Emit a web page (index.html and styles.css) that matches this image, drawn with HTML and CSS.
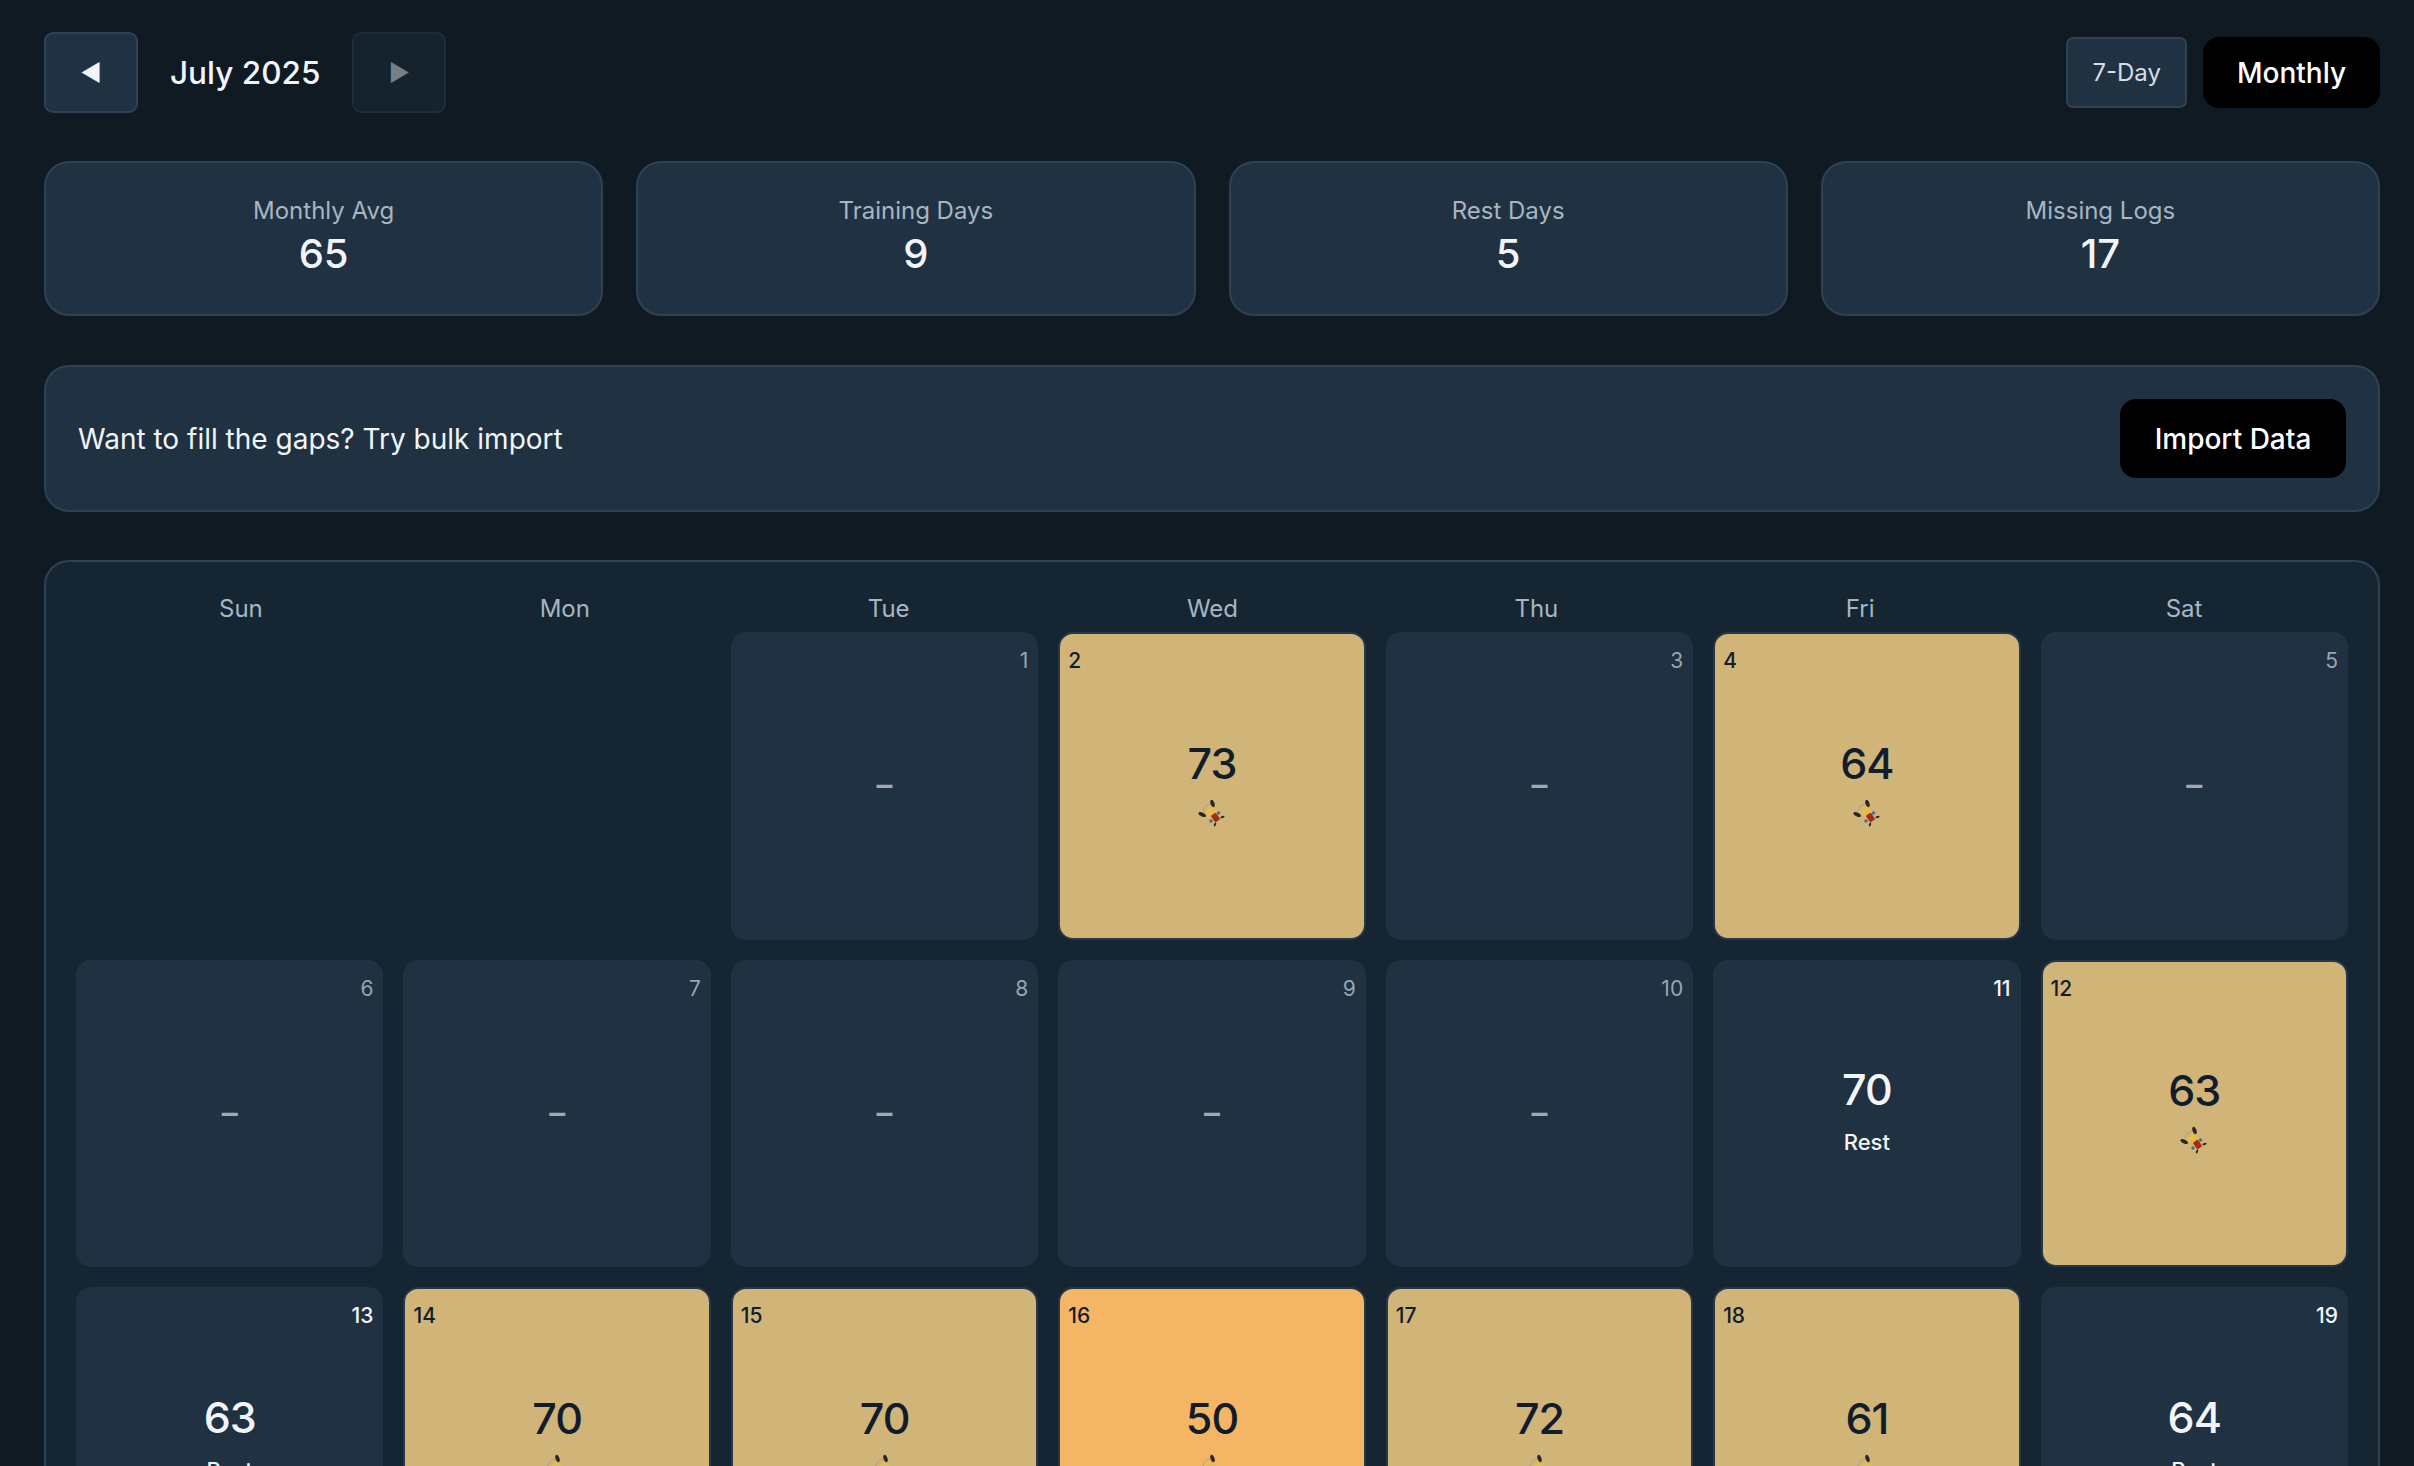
FILE: index.html
```html
<!DOCTYPE html>
<html>
<head>
	<title>Calendar</title>
	<link rel="stylesheet" href="styles.css">
</head>
<body>
	<svg class="defs" width="0" height="0">
		<symbol id="lifter" viewBox="0 0 28 28">
			<path d="M5 12 C6 8 9 5 13 5" stroke="#b5a67f" stroke-width="1.200" fill="none"/>
			<ellipse cx="14.500" cy="4.500" rx="1.900" ry="3.800" transform="rotate(-20 14.500 4.500)" fill="#26262a"/>
			<ellipse cx="4.200" cy="15.500" rx="4" ry="1.900" transform="rotate(25 4.200 15.500)" fill="#26262a"/>
			<path d="M7.500 13 L14 7.500 L20 13 L15 22 Z" fill="#e8bc4c"/>
			<rect x="14.500" y="14.500" width="6" height="8" rx="1" transform="rotate(-35 17.500 18.500)" fill="#a52a1c"/>
			<circle cx="20.500" cy="14" r="1.700" fill="#3a6ea5"/>
			<circle cx="13" cy="22" r="1.700" fill="#3a6ea5"/>
			<ellipse cx="24.500" cy="18" rx="2.100" ry="1" transform="rotate(-20 24.500 18)" fill="#26262a"/>
			<ellipse cx="17" cy="25.500" rx="1" ry="2.100" transform="rotate(20 17 25.500)" fill="#26262a"/>
		</symbol>
	</svg>

	<div class="topbar">
		<div class="month-nav">
			<button class="nav-btn">&#9664;</button>
			<h1 class="month-title">July 2025</h1>
			<button class="nav-btn nav-off">&#9654;</button>
		</div>
		<div class="view-switch">
			<button class="view-btn">7-Day</button>
			<button class="view-btn view-on">Monthly</button>
		</div>
	</div>

	<div class="stats">
		<div class="stat"><div class="stat-label">Monthly Avg</div><div class="stat-value">65</div></div>
		<div class="stat"><div class="stat-label">Training Days</div><div class="stat-value">9</div></div>
		<div class="stat"><div class="stat-label">Rest Days</div><div class="stat-value">5</div></div>
		<div class="stat"><div class="stat-label">Missing Logs</div><div class="stat-value">17</div></div>
	</div>

	<div class="banner">
		<span>Want to fill the gaps? Try bulk import</span>
		<button class="import-btn">Import Data</button>
	</div>

	<div class="calendar">
		<div class="weekdays">
			<div>Sun</div><div>Mon</div><div>Tue</div><div>Wed</div><div>Thu</div><div>Fri</div><div>Sat</div>
		</div>
		<div class="days">
			<div></div>
			<div></div>
			<div class="day"><span class="num">1</span><span class="dash">–</span></div>
			<div class="day trained"><span class="num">2</span><span class="score">73</span><svg class="lift"><use href="#lifter"/></svg></div>
			<div class="day"><span class="num">3</span><span class="dash">–</span></div>
			<div class="day trained"><span class="num">4</span><span class="score">64</span><svg class="lift"><use href="#lifter"/></svg></div>
			<div class="day"><span class="num">5</span><span class="dash">–</span></div>

			<div class="day"><span class="num">6</span><span class="dash">–</span></div>
			<div class="day"><span class="num">7</span><span class="dash">–</span></div>
			<div class="day"><span class="num">8</span><span class="dash">–</span></div>
			<div class="day"><span class="num">9</span><span class="dash">–</span></div>
			<div class="day"><span class="num">10</span><span class="dash">–</span></div>
			<div class="day rest"><span class="num">11</span><span class="score">70</span><span class="rest-label">Rest</span></div>
			<div class="day trained"><span class="num">12</span><span class="score">63</span><svg class="lift"><use href="#lifter"/></svg></div>

			<div class="day rest"><span class="num">13</span><span class="score">63</span><span class="rest-label">Rest</span></div>
			<div class="day trained"><span class="num">14</span><span class="score">70</span><svg class="lift"><use href="#lifter"/></svg></div>
			<div class="day trained"><span class="num">15</span><span class="score">70</span><svg class="lift"><use href="#lifter"/></svg></div>
			<div class="day trained low"><span class="num">16</span><span class="score">50</span><svg class="lift"><use href="#lifter"/></svg></div>
			<div class="day trained"><span class="num">17</span><span class="score">72</span><svg class="lift"><use href="#lifter"/></svg></div>
			<div class="day trained"><span class="num">18</span><span class="score">61</span><svg class="lift"><use href="#lifter"/></svg></div>
			<div class="day rest"><span class="num">19</span><span class="score">64</span><span class="rest-label">Rest</span></div>
		</div>
	</div>
</body>
</html>
```

FILE: styles.css
```css
html, body {
	height: 100%;
	overflow: hidden;
}

body {
	margin: 0;
	padding: 32px 34px 0 44px;
	box-sizing: border-box;
	background: #0f1a23;
	color: #f1f5f9;
	font-family: Inter, "Liberation Sans", sans-serif;
}

button {
	font-family: inherit;
	cursor: pointer;
}

.defs {
	position: absolute;
}

.topbar {
	display: flex;
	justify-content: space-between;
	align-items: center;
	height: 81px;
	margin-bottom: 48px;
}

.month-nav {
	display: flex;
	align-items: center;
	gap: 32px;
}

.month-title {
	margin: 0;
	font-size: 31.5px;
	font-weight: 500;
}

.nav-btn {
	width: 94px;
	height: 81px;
	background: #203141;
	border: 2px solid #2e4256;
	border-radius: 9px;
	color: #f1f5f9;
	font-size: 23px;
}

.nav-off {
	background: #15232f;
	border-color: #1e2d3b;
	color: #767f88;
}

.view-switch {
	display: flex;
	gap: 16px;
}

.view-btn {
	height: 71px;
	padding: 0 24px;
	background: #203141;
	border: 2px solid #2e4256;
	border-radius: 7px;
	color: #d5dee6;
	font-size: 24px;
}

.view-on {
	padding: 0 34px;
	background: #000;
	border: 0;
	border-radius: 16px;
	color: #fff;
	font-size: 28px;
	font-weight: 500;
}

.stats {
	display: grid;
	grid-template-columns: repeat(4, 1fr);
	gap: 33px;
	margin-bottom: 49px;
}

.stat {
	height: 155px;
	box-sizing: border-box;
	padding-top: 33px;
	background: #203141;
	border: 2px solid #2e4256;
	border-radius: 25px;
	text-align: center;
}

.stat-label {
	font-size: 24px;
	color: #a6b6c3;
}

.stat-value {
	margin-top: 6px;
	font-size: 40px;
	font-weight: 500;
	line-height: 46px;
}

.banner {
	display: flex;
	justify-content: space-between;
	align-items: center;
	height: 147px;
	box-sizing: border-box;
	padding: 0 32px;
	margin-bottom: 48px;
	background: #203141;
	border: 2px solid #2e4256;
	border-radius: 25px;
	font-size: 28px;
}

.import-btn {
	width: 226px;
	height: 79px;
	background: #000;
	border: 0;
	border-radius: 16px;
	color: #fff;
	font-size: 28px;
	font-weight: 500;
}

.calendar {
	padding: 32px 30px;
	background: #162532;
	border: 2px solid #2e4256;
	border-radius: 25px;
}

.weekdays {
	display: grid;
	grid-template-columns: repeat(7, 1fr);
	margin-bottom: 8px;
	padding: 0 2px 0 3px;
	text-align: center;
	font-size: 24px;
	line-height: 30px;
	color: #a6b6c3;
}

.days {
	display: grid;
	grid-template-columns: repeat(7, 1fr);
	grid-auto-rows: 307.6px;
	gap: 20px;
}

.day {
	position: relative;
	display: flex;
	flex-direction: column;
	align-items: center;
	justify-content: center;
	box-sizing: border-box;
	background: #203141;
	border-radius: 15px;
}

.num {
	position: absolute;
	top: 16px;
	right: 10px;
	font-size: 21px;
	line-height: 26px;
	color: #9aa5b1;
}

.dash {
	margin-top: -2px;
	font-size: 32px;
	font-weight: 600;
	color: #9ea8b6;
}

.score {
	margin-top: -8px;
	font-size: 43px;
	font-weight: 500;
	line-height: 52px;
	letter-spacing: -1px;
}

.rest .num {
	font-weight: 500;
	color: #f1f5f9;
}

.rest-label {
	margin-top: 14px;
	font-size: 22px;
	font-weight: 500;
}

.trained {
	background: #d0b478;
	border: 2px solid #26374a;
	color: #111c2c;
}

.trained .num {
	top: 14px;
	left: 8px;
	right: auto;
	font-weight: 500;
	color: #111c2c;
}

.low {
	background: #f4b565;
}

.lift {
	width: 28px;
	height: 28px;
	margin-top: 10px;
}
```
